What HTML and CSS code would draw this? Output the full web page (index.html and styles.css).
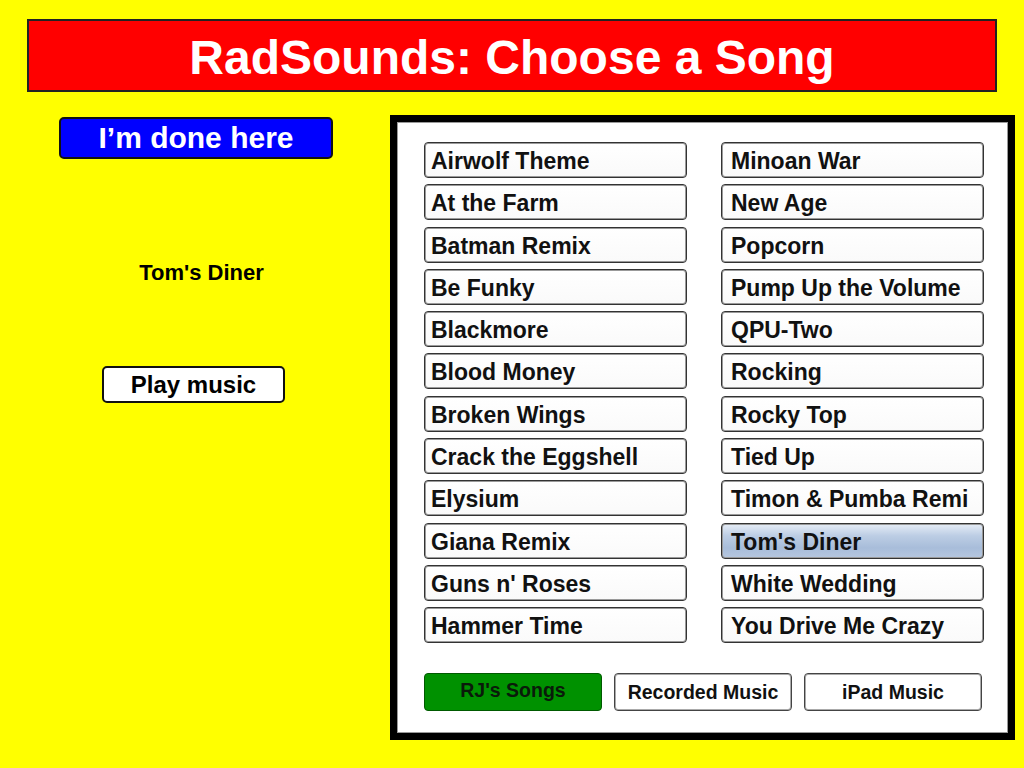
FILE: index.html
```html
<!DOCTYPE html>
<html lang="en">
<head>
  <meta charset="UTF-8" />
  <meta name="viewport" content="width=device-width, initial-scale=1.0" />
  <title>RadSounds</title>
  <link rel="stylesheet" href="styles.css">
</head>
<body>

  <header class="title">RadSounds: Choose a Song</header>

  <div class="main">
    <!-- lado esquerdo: sair, musica atual, tocar -->
    <div class="side">
      <button class="done">I’m done here</button>
      <div class="current">Tom's Diner</div>
      <button class="play">Play music</button>
    </div>

    <!-- lista de musicas -->
    <div class="panel">
      <div class="songs">
        <div class="song">Airwolf Theme</div>
        <div class="song">Minoan War</div>
        <div class="song">At the Farm</div>
        <div class="song">New Age</div>
        <div class="song">Batman Remix</div>
        <div class="song">Popcorn</div>
        <div class="song">Be Funky</div>
        <div class="song">Pump Up the Volume</div>
        <div class="song">Blackmore</div>
        <div class="song">QPU-Two</div>
        <div class="song">Blood Money</div>
        <div class="song">Rocking</div>
        <div class="song">Broken Wings</div>
        <div class="song">Rocky Top</div>
        <div class="song">Crack the Eggshell</div>
        <div class="song">Tied Up</div>
        <div class="song">Elysium</div>
        <div class="song">Timon &amp; Pumba Remi</div>
        <div class="song">Giana Remix</div>
        <div class="song selected">Tom's Diner</div>
        <div class="song">Guns n' Roses</div>
        <div class="song">White Wedding</div>
        <div class="song">Hammer Time</div>
        <div class="song">You Drive Me Crazy</div>
      </div>

      <div class="tabs">
        <div class="tab active">RJ's Songs</div>
        <div class="tab">Recorded Music</div>
        <div class="tab">iPad Music</div>
      </div>
    </div>
  </div>

</body>
</html>
```

FILE: styles.css
```css
body {
  margin: 0;
  width: 1024px;
  height: 768px;
  background: #ffff00;
  font-family: "Liberation Sans", Arial, Helvetica, sans-serif;
  font-weight: bold;
  overflow: hidden;
}

.title {
  margin: 19px 27px 0 27px;
  height: 69px;
  border: 2px solid #222;
  background: #ff0000;
  color: #fff;
  font-size: 48px;
  line-height: 73px;
  text-align: center;
}

.main {
  display: flex;
  margin-top: 23px;
}

.side {
  width: 390px;
  display: flex;
  flex-direction: column;
  align-items: flex-start;
}

.done {
  margin: 2px 0 0 59px;
  width: 274px;
  height: 42px;
  border: 2px solid #111;
  border-radius: 5px;
  background: #0000ff;
  color: #fff;
  font-family: inherit;
  font-weight: bold;
  font-size: 30px;
  padding: 0;
  line-height: 38px;
}

.current {
  margin: 101px 0 0 0;
  width: 403px;
  text-align: center;
  font-size: 22px;
  line-height: 26px;
  color: #000;
}

.play {
  margin: 80px 0 0 102px;
  width: 183px;
  height: 37px;
  border: 2px solid #111;
  border-radius: 5px;
  background: #fff;
  color: #000;
  font-family: inherit;
  font-weight: bold;
  font-size: 24px;
  padding: 0;
  line-height: 31px;
}

.panel {
  width: 611px;
  height: 611px;
  border: 7px solid #000;
  box-shadow: inset 0 0 0 1px #999;
  background: #fff;
  box-sizing: content-box;
  padding: 0;
}

.songs {
  display: grid;
  grid-template-columns: 263px 263px;
  grid-auto-rows: 36px;
  column-gap: 34px;
  row-gap: 6.3px;
  margin: 20px 0 0 27px;
}

.song {
  box-sizing: border-box;
  border: 1px solid #333;
  box-shadow: inset 0 0 0 1px #9a9a9a;
  border-radius: 4px;
  background: linear-gradient(#fff, #fafafa);
  padding: 3px 0 0 6px;
  font-size: 23px;
  line-height: 30px;
  color: #111;
  white-space: nowrap;
}

/* coluna da direita tem o texto um pouco mais para dentro */
.song:nth-child(even) {
  padding-left: 9px;
}

.song.selected {
  background: linear-gradient(#e6edf6 0%, #bccde4 35%, #a8bdda 70%, #b6c7df 100%);
}

.tabs {
  display: flex;
  gap: 12px;
  margin: 30px 0 0 27px;
}

.tab {
  box-sizing: border-box;
  width: 178px;
  height: 38px;
  border: 1px solid #444;
  box-shadow: inset 0 0 0 1px #aaa;
  border-radius: 4px;
  background: #fff;
  font-size: 19.5px;
  line-height: 36px;
  text-align: center;
  color: #111;
}

.tab.active {
  background: #009100;
  border-color: #005a00;
  box-shadow: none;
  line-height: 32px;
  color: #0a1a0a;
}
```
